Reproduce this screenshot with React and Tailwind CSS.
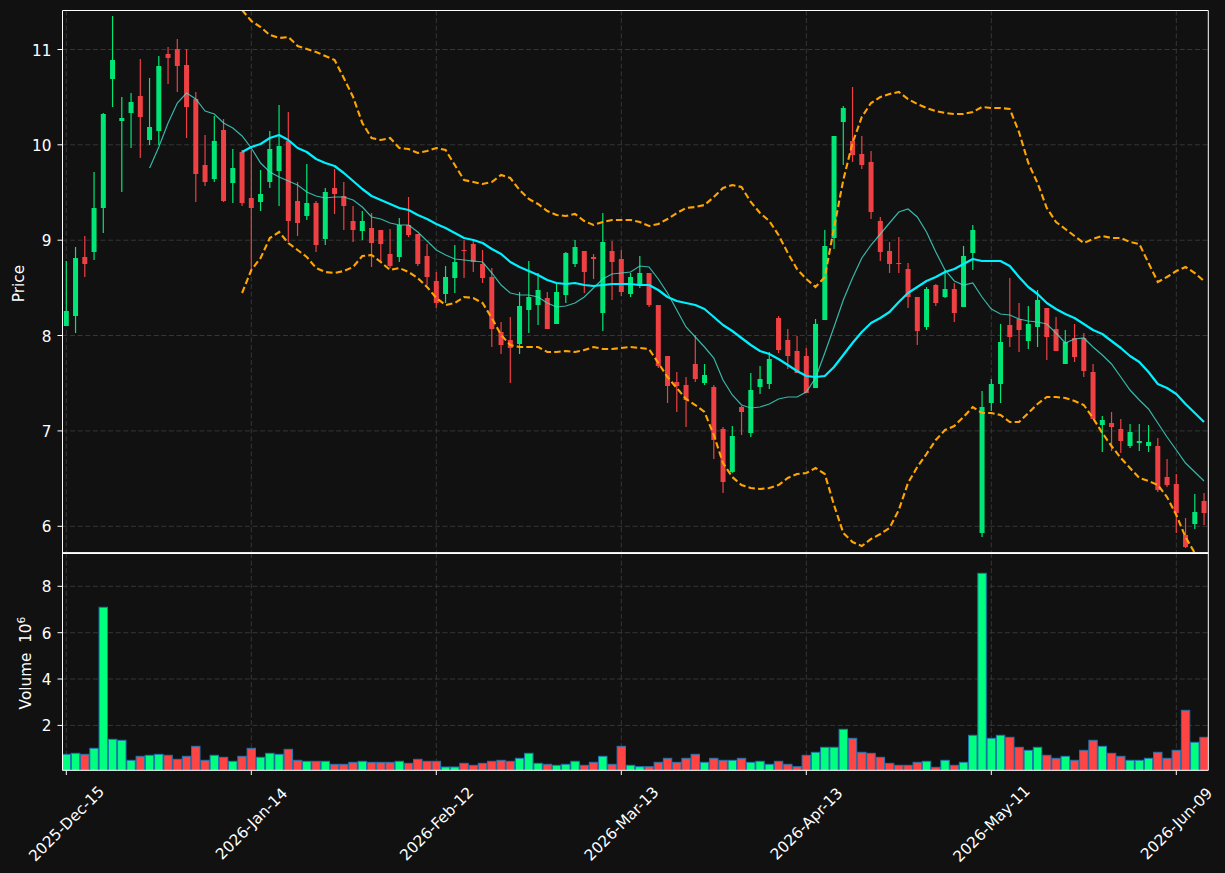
const X = (i) => 66.3 + 9.25 * i

// pixel rows read off the chart: wick top, body top, body bottom, wick bottom, up
const CANDLES = [
  [261,311,326,326,1],[247,258,316,333,1],[236,257,264,277,0],[172,208,252,260,1],[113,114,208,233,1],
  [16,60,79,107,1],[97,118,121,192,1],[93,102,113,148,1],[59,96,117,158,0],[78,127,140,145,1],
  [56,66,131,145,1],[47,54,58,84,0],[39,49,66,92,0],[49,65,107,138,0],[92,99,174,202,0],
  [135,165,182,186,0],[116,141,179,182,1],[119,130,201,202,0],[149,168,183,203,1],[150,152,203,206,0],
  [150,198,208,272,0],[170,194,202,211,1],[131,149,182,188,1],[105,146,171,206,1],[112,141,221,242,0],
  [182,201,223,236,0],[164,203,216,220,1],[201,203,245,252,0],[188,192,239,245,1],[169,188,194,214,0],
  [182,196,206,230,0],[206,221,230,242,0],[211,221,231,240,1],[213,228,243,267,0],[230,230,244,262,0],
  [229,254,266,268,0],[218,225,257,262,1],[197,225,235,237,0],[234,234,264,266,0],[244,256,277,285,0],
  [272,281,303,308,0],[266,277,294,303,1],[245,262,278,293,1],[240,250,251,278,0],[241,244,262,272,0],
  [250,264,278,283,0],[268,277,329,347,0],[322,332,345,354,0],[317,340,348,383,0],[292,306,344,354,1],
  [261,297,310,333,1],[273,290,305,325,1],[292,298,329,329,0],[283,292,324,324,1],[252,253,295,303,1],
  [240,247,264,267,1],[251,251,272,293,0],[254,257,259,279,0],[213,242,313,331,1],[241,251,262,300,0],
  [250,259,292,296,0],[273,277,294,297,1],[256,273,286,288,1],[273,273,305,307,0],[305,305,366,368,0],
  [356,356,386,403,0],[372,382,386,412,0],[377,385,400,427,0],[335,364,379,382,0],[364,375,383,385,1],
  [385,387,440,459,0],[427,429,482,493,0],[426,436,472,473,1],[406,407,412,435,0],[373,390,433,437,1],
  [366,379,387,394,1],[352,359,384,389,1],[316,318,350,353,0],[329,340,356,369,0],[336,351,373,373,0],
  [348,356,393,393,0],[319,324,388,388,1],[230,246,320,320,1],[136,136,238,249,1],[106,108,122,165,1],
  [87,141,155,162,0],[136,154,165,169,0],[151,162,212,219,0],[217,221,252,261,0],[242,251,264,273,0],
  [237,263,264,273,0],[263,269,297,308,0],[297,297,331,345,0],[287,289,327,330,1],[284,285,303,306,0],
  [270,289,297,298,1],[283,289,313,322,0],[246,256,307,307,1],[225,230,253,270,1],[391,407,533,537,1],
  [379,384,403,411,1],[324,342,384,403,1],[278,325,337,347,0],[303,319,330,352,0],[306,324,341,349,1],
  [290,300,327,347,1],[308,308,337,360,0],[317,329,351,351,0],[330,342,364,364,1],[324,338,357,362,0],
  [333,338,371,377,0],[364,372,419,419,0],[416,420,425,452,1],[412,423,427,451,0],[419,429,441,453,0],
  [424,432,446,448,1],[424,441,443,451,1],[425,442,446,452,1],[438,446,490,492,0],[459,477,485,487,0],
  [474,484,513,533,0],[518,535,547,548,0],[494,512,524,529,1],[493,501,513,525,0],
]

const VOLUME_TOPS = [
  754.3,753.3,754.3,748.3,607.3,739.3,740.3,760.3,756.3,755.3,754.3,755.3,759.3,756.3,746.3,760.3,755.3,757.3,761.3,756.3,
  748.3,757.3,753.3,754.3,749.3,760.3,761.3,761.3,761.3,764.3,764.3,762.3,761.3,762.3,762.3,762.3,761.3,763.3,759.3,761.3,
  761.3,767,767,763.3,765.3,763.3,761.3,760.3,761.3,758.3,753.3,763.3,764.3,765.3,764.3,761.3,765.3,762.3,756.3,764.3,
  746.3,765.3,766.7,766.7,762.3,758.3,762.3,758.3,754.3,762.3,758.3,760.3,760.3,758.3,762.3,761.3,764.3,761.3,764.3,766.7,
  755.3,752.3,747.3,747.3,729.3,738.3,752.3,753.3,757.3,763.3,765.3,765.3,762.3,761.3,767.3,760.3,765.3,762.3,735.3,573.3,
  738.3,735.3,737.3,747.3,750.3,747.3,755.3,758.3,756.3,760.3,750.3,740.3,746.3,753.3,756.3,760.3,760.3,758.3,752.3,758.3,
  750.3,710.3,742.3,737.3,
]

// starts at i = 9
const MA_SHORT = [
  168,147,123,103,93,99,111,114,123,128,136,148,163,172,177,181,185,192,196,198,197,197,200,207,217,219,223,225,225,232,
  241,250,255,259,260,261,262,273,285,293,295,295,297,303,307,306,303,297,288,279,274,273,272,266,267,279,293,310,327,337,
  347,358,380,395,405,408,407,404,399,397,397,392,378,353,327,300,278,258,245,234,223,212,209,217,232,252,270,281,285,283,
  297,309,314,315,319,321,322,324,333,343,339,338,347,355,364,377,390,400,409,423,437,450,463,472,481,
]

// starts at i = 19
const MA_LONG = [
  152,147,144,138,135,140,148,152,159,163,166,173,181,189,196,200,204,208,210,215,219,224,228,233,238,240,243,249,254,262,
  267,271,275,280,283,284,283,285,286,285,284,284,284,285,285,290,297,301,303,305,309,317,325,331,338,345,351,354,359,365,
  371,376,377,376,367,355,343,332,323,318,312,302,293,287,281,277,272,269,264,259,261,261,261,266,277,287,294,303,309,314,
  318,324,330,334,341,348,356,362,372,384,388,394,404,413,422,
]

const BAND_UPPER = [
  10,21,27,35,38,37,46,49,52,56,60,78,97,123,138,140,138,148,149,153,151,148,150,165,180,182,184,182,175,178,
  190,199,204,211,215,216,214,221,225,222,220,220,220,222,226,224,219,213,208,207,205,197,188,185,187,202,213,221,235,253,
  269,279,287,277,228,180,143,117,103,97,94,92,99,104,108,111,113,114,114,112,107,108,108,109,132,163,183,208,222,229,
  236,243,239,236,238,238,242,244,263,282,277,271,267,273,281,
]

const BAND_LOWER = [
  293,270,258,238,232,243,250,257,268,272,273,271,267,256,255,262,270,268,272,278,287,298,305,303,297,298,303,318,335,345,
  347,347,347,352,352,351,352,350,347,349,349,348,347,348,349,363,377,388,399,405,412,435,463,477,485,488,489,488,485,478,
  474,473,468,474,505,533,542,546,539,534,528,510,483,467,454,440,430,426,417,407,413,413,415,422,422,413,404,397,397,398,
  401,405,418,433,446,458,468,478,481,485,497,515,537,553,570,
]

const PRICE_TICKS = [
  { y: 49.5, label: '11' },
  { y: 144.8, label: '10' },
  { y: 240.2, label: '9' },
  { y: 335.5, label: '8' },
  { y: 430.9, label: '7' },
  { y: 526.3, label: '6' },
]

const VOLUME_TICKS = [
  { y: 586.3, label: '8' },
  { y: 632.7, label: '6' },
  { y: 679, label: '4' },
  { y: 725.4, label: '2' },
]

const DATE_TICKS = [
  { i: 0, label: '2025-Dec-15' },
  { i: 20, label: '2026-Jan-14' },
  { i: 40, label: '2026-Feb-12' },
  { i: 60, label: '2026-Mar-13' },
  { i: 80, label: '2026-Apr-13' },
  { i: 100, label: '2026-May-11' },
  { i: 120, label: '2026-Jun-09' },
]

const linePath = (ys, start) => ys.map((y, k) => `${k ? 'L' : 'M'}${X(k + start).toFixed(1)} ${y}`).join(' ')

function Grid({ ticks, top, bottom }) {
  return (
    <g className="stroke-[#363636]" strokeWidth="1" strokeDasharray="5 2.6">
      {ticks.map((t) => <line key={t.y} x1="62.5" x2="1208" y1={t.y} y2={t.y} />)}
      {DATE_TICKS.map((t) => <line key={t.i} x1={X(t.i)} x2={X(t.i)} y1={top} y2={bottom} />)}
    </g>
  )
}

function YTicks({ ticks }) {
  return ticks.map((t) => (
    <g key={t.y}>
      <line x1="57.5" x2="62.5" y1={t.y} y2={t.y} className="stroke-white" strokeWidth="1" />
      <text x="51.5" y={t.y + 6} textAnchor="end" className="fill-white text-[15.28px]">{t.label}</text>
    </g>
  ))
}

function PricePanel() {
  return (
    <svg viewBox="0 0 1225 553" className="block w-[1225px] h-[553px]">
      <defs>
        <clipPath id="price-clip"><rect x="62.5" y="10.5" width="1145.5" height="542.5" /></clipPath>
      </defs>
      <Grid ticks={PRICE_TICKS} top={10.5} bottom={553} />
      <g clipPath="url(#price-clip)">
        {CANDLES.map(([hi, top, bot, lo, up], i) => (
          <g key={i} className={up ? 'fill-[#00e676] stroke-[#00e676]' : 'fill-[#ef4044] stroke-[#ef4044]'}>
            <line x1={X(i)} x2={X(i)} y1={hi} y2={lo} strokeWidth="1.2" />
            <rect x={X(i) - 2.5} y={top} width="5" height={bot - top} stroke="none" />
          </g>
        ))}
        <path d={linePath(MA_SHORT, 9)} fill="none" stroke="#40e0d0" strokeOpacity="0.8" strokeWidth="1.2" />
        <path d={linePath(MA_LONG, 19)} fill="none" stroke="#00f0ff" strokeWidth="2.2" strokeLinejoin="round" />
        <path d={linePath(BAND_UPPER, 19)} fill="none" stroke="#ffa500" strokeWidth="2.1" strokeDasharray="6.5 3.2" />
        <path d={linePath(BAND_LOWER, 19)} fill="none" stroke="#ffa500" strokeWidth="2.1" strokeDasharray="6.5 3.2" />
      </g>
      <path d="M62.5 552.6V10.5H1208.3V552.6M62 552.6H1208.8" fill="none" className="stroke-white" strokeWidth="1" />
      <YTicks ticks={PRICE_TICKS} />
      <text transform="translate(24 283.5) rotate(-90)" textAnchor="middle" className="fill-white text-[15.28px]">Price</text>
    </svg>
  )
}

function VolumePanel() {
  return (
    <svg viewBox="0 553 1225 320" className="block w-[1225px] h-[320px]">
      <defs>
        <clipPath id="volume-clip"><rect x="62.5" y="553" width="1145.5" height="217.5" /></clipPath>
      </defs>
      <Grid ticks={VOLUME_TICKS} top={553} bottom={770} />
      <g clipPath="url(#volume-clip)">
        {VOLUME_TOPS.map((top, i) => (
          <rect
            key={i}
            x={X(i) - 4.2}
            y={top}
            width="8.4"
            height={771 - top}
            stroke="#1f77b4"
            strokeWidth="1"
            className={CANDLES[i][4] ? 'fill-[#00ff7f]' : 'fill-[#ff4444]'}
          />
        ))}
      </g>
      <path d="M62.5 553.5V770.3H1208.3V553.5M62 553.5H1208.8" fill="none" className="stroke-white" strokeWidth="1" />
      <YTicks ticks={VOLUME_TICKS} />
      <text transform="translate(31 663) rotate(-90)" textAnchor="middle" className="fill-white text-[15.28px]">
        Volume{'\u00a0\u00a0'}10<tspan dy="-6" className="text-[10.7px]">6</tspan>
      </text>
      {DATE_TICKS.map((t) => (
        <g key={t.i}>
          <line x1={X(t.i)} x2={X(t.i)} y1="770.5" y2="775" className="stroke-white" strokeWidth="1" />
          <text
            transform={`translate(${X(t.i)} 823.5) rotate(-45)`}
            y="5.5"
            textAnchor="middle"
            className="fill-white text-[15.28px]"
          >
            {t.label}
          </text>
        </g>
      ))}
    </svg>
  )
}

export default function App() {
  return (
    <div className="flex flex-col w-[1225px] h-[873px] bg-[#111111] overflow-hidden [font-family:'DejaVu_Sans',sans-serif]">
      <PricePanel />
      <VolumePanel />
    </div>
  )
}
